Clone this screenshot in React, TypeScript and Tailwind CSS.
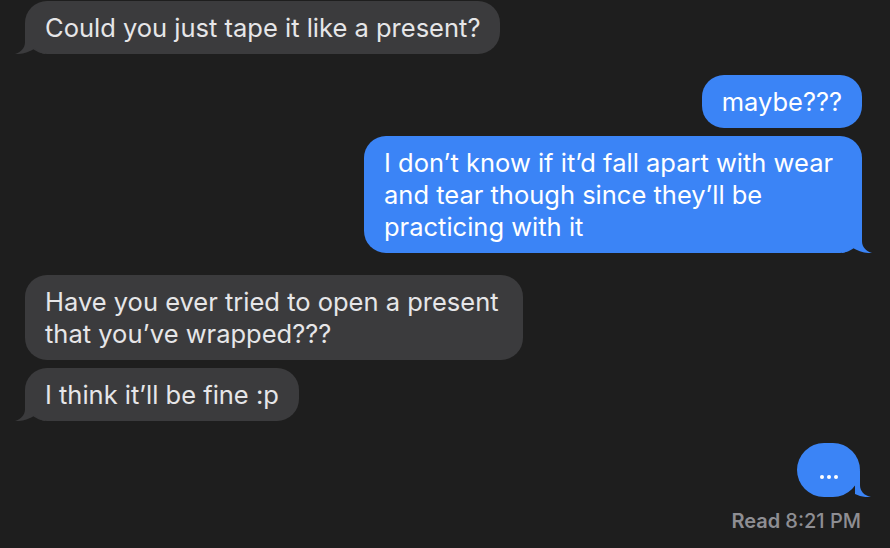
import type { ReactNode } from "react"

type Side = "in" | "out"

function Tail({ side, color }: { side: Side; color: string }) {
  return (
    <svg
      width="30"
      height="24"
      viewBox="0 0 30 24"
      className={
        side === "in"
          ? "absolute -left-[10px] bottom-0"
          : "absolute -right-[10px] bottom-0 -scale-x-100"
      }
    >
      <path
        d="M10 0 L10 12 C10 18 6 22 0 24 C7 24.5 14 22 20 18.5 C23 21.5 26 23.5 30 24 L30 0 Z"
        fill={color}
      />
    </svg>
  )
}

function Bubble({
  side,
  tail,
  children,
}: {
  side: Side
  tail?: boolean
  children: ReactNode
}) {
  const color = side === "in" ? "#3b3b3d" : "#3b84f6"
  return (
    <div
      className={`relative max-w-[498px] rounded-[22px] px-5 py-[10.5px] text-[25.5px] leading-[32px] ${
        side === "in"
          ? "self-start bg-[#3b3b3d] text-[#e6e6e8]"
          : "self-end bg-[#3b84f6] text-white"
      }`}
    >
      {tail && <Tail side={side} color={color} />}
      <span className="relative">{children}</span>
    </div>
  )
}

export default function App() {
  return (
    <div
      className="flex h-[548px] w-full flex-col overflow-hidden bg-[#1e1e1e] pt-[1px] pl-[25px] pr-[28px]"
      style={{ fontFamily: "Inter, 'Noto Sans', sans-serif" }}
    >
      <Bubble side="in" tail>
        Could you just tape it like a present?
      </Bubble>

      <div className="mt-[21px] flex flex-col gap-2">
        <Bubble side="out">maybe???</Bubble>
        <Bubble side="out" tail>
          I don’t know if it’d fall apart with wear and tear though since
          they’ll be practicing with it
        </Bubble>
      </div>

      <div className="mt-[22px] flex flex-col gap-2">
        <Bubble side="in">
          Have you ever tried to open a present that you’ve wrapped???
        </Bubble>
        <Bubble side="in" tail>
          I think it’ll be fine :p
        </Bubble>
      </div>

      <div className="relative mt-[22px] mr-[2px] flex h-[54px] w-[63px] items-end justify-center self-end rounded-[27px] bg-[#3b84f6] pb-[18px]">
        <svg
          width="16"
          height="26"
          viewBox="0 0 16 26"
          className="absolute -right-[11px] bottom-0"
        >
          <path
            d="M0 0 L5 0 L5 14 C5 20 9 24.5 16 26 C10 26.5 5 25.5 0 23 Z"
            fill="#3b84f6"
          />
        </svg>
        <div className="flex gap-[3px]">
          <span className="h-[4px] w-[4px] rounded-full bg-white" />
          <span className="h-[4px] w-[4px] rounded-full bg-white" />
          <span className="h-[4px] w-[4px] rounded-full bg-white" />
        </div>
      </div>

      <div className="mt-[13px] self-end pr-[1px] text-[20px] font-semibold leading-[22px] text-[#8e8e93]">
        Read <span className="font-medium">8:21 PM</span>
      </div>
    </div>
  )
}
